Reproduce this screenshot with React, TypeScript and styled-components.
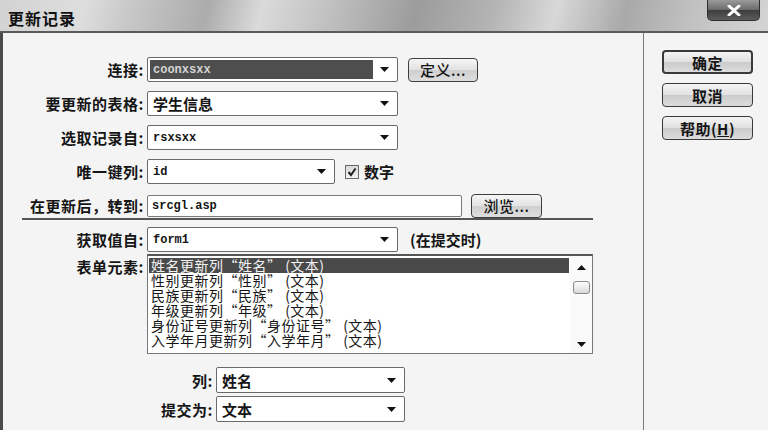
import React from "react";
import styled, { createGlobalStyle } from "styled-components";

const GlobalStyle = createGlobalStyle`
  * { box-sizing: border-box; }
  body {
    margin: 0;
    background: #f3f3f3;
    font-family: "Noto Sans CJK SC", "Liberation Sans", sans-serif;
    color: #151515;
  }
`;

const Window = styled.div`
  width: 768px;
  height: 430px;
  overflow: hidden;
  display: flex;
  flex-direction: column;
  background: #f4f4f4;
`;

const TitleBar = styled.div`
  height: 33px;
  flex: none;
  display: flex;
  justify-content: space-between;
  align-items: flex-start;
  padding: 0 8px 0 8px;
  border-bottom: 2px solid #5a5a5a;
  background: linear-gradient(
    105deg,
    #d2d2d2 0%,
    #dedede 11%,
    #c8c8c8 17%,
    #acacac 27%,
    #dadada 34%,
    #c6c6c6 41%,
    #9c9c9c 54%,
    #b4b4b4 64%,
    #d8d8d8 72%,
    #a9a9a9 81%,
    #c2c2c2 90%,
    #d4d4d4 100%
  );
`;

const Title = styled.div`
  margin-top: 6px;
  font-size: 16px;
  font-weight: 700;
  letter-spacing: 1px;
  color: #111;
`;

const CloseButton = styled.div`
  width: 53px;
  height: 21px;
  display: flex;
  align-items: center;
  justify-content: center;
  border: 1px solid #2e2e2e;
  border-top: none;
  border-radius: 0 0 5px 5px;
  background: linear-gradient(#9a9a9a, #6a6a6a 50%, #3e3e3e 51%, #5c5c5c);
`;

const Body = styled.div`
  flex: 1;
  display: flex;
  border-left: 3px solid #4a4a4a;
`;

const Main = styled.div`
  width: 641px;
  border-right: 1px solid #7a7a7a;
  padding-top: 24px;
  display: flex;
  flex-direction: column;
`;

const Group = styled.div<{ gap: number; top?: number }>`
  display: flex;
  flex-direction: column;
  gap: ${(p) => p.gap}px;
  margin-top: ${(p) => p.top ?? 0}px;
`;

const Row = styled.div<{ h?: number; top?: boolean }>`
  display: flex;
  align-items: ${(p) => (p.top ? "flex-start" : "center")};
  height: ${(p) => p.h ?? 25}px;
`;

const Label = styled.div<{ w: number; pt?: number }>`
  width: ${(p) => p.w}px;
  flex: none;
  text-align: right;
  font-size: 15px;
  font-weight: 700;
  letter-spacing: 0.5px;
  padding-top: ${(p) => p.pt ?? 0}px;
  margin-right: 3px;
  white-space: nowrap;
`;

const SelectBox = styled.div<{ w: number; h?: number }>`
  width: ${(p) => p.w}px;
  height: ${(p) => p.h ?? 25}px;
  flex: none;
  display: flex;
  align-items: center;
  background: #fff;
  border: 1px solid #6a6a6a;
  border-radius: 2px;
  padding: 2px;
`;

const Value = styled.div<{ mono?: boolean; selected?: boolean }>`
  flex: 1;
  height: 100%;
  display: flex;
  align-items: center;
  padding-left: 3px;
  font-family: ${(p) =>
    p.mono
      ? `"Liberation Mono", "DejaVu Sans Mono", monospace`
      : `"Noto Sans CJK SC", sans-serif`};
  font-size: ${(p) => (p.mono ? 12 : 15)}px;
  font-weight: 700;
  background: ${(p) => (p.selected ? "#4e4e4e" : "transparent")};
  color: ${(p) => (p.selected ? "#d4d4d4" : "#151515")};
`;

const ArrowCell = styled.div`
  width: 22px;
  flex: none;
  display: flex;
  justify-content: center;
  align-items: center;
`;

const TextInput = styled.div<{ w: number }>`
  width: ${(p) => p.w}px;
  height: 22px;
  flex: none;
  display: flex;
  align-items: center;
  padding-left: 4px;
  background: #fff;
  border: 1px solid #7a7a7a;
  border-radius: 2px;
  font-family: "Liberation Mono", "DejaVu Sans Mono", monospace;
  font-size: 12px;
  font-weight: 700;
`;

const SmallButton = styled.div<{ w: number; ml: number }>`
  width: ${(p) => p.w}px;
  height: 24px;
  margin-left: ${(p) => p.ml}px;
  flex: none;
  display: flex;
  align-items: center;
  justify-content: center;
  border: 1px solid #3e3e3e;
  border-radius: 4px;
  background: linear-gradient(#f6f6f6, #e2e2e2 50%, #cfcfcf 52%, #dedede);
  font-size: 15px;
  font-weight: 500;
  letter-spacing: 0.5px;
`;

const CheckBox = styled.div`
  width: 14px;
  height: 14px;
  margin-left: 10px;
  flex: none;
  display: flex;
  align-items: center;
  justify-content: center;
  border: 1px solid #6a6a6a;
  background: linear-gradient(#d8d8d8, #f4f4f4);
`;

const Aside = styled.span<{ ml: number }>`
  margin-left: ${(p) => p.ml}px;
  font-size: 15px;
  font-weight: 700;
`;

const Divider = styled.div`
  margin: 0 0 0 19px;
  width: 571px;
  border-top: 2px solid #555;
`;

const ListBox = styled.div`
  width: 446px;
  height: 100px;
  flex: none;
  display: flex;
  background: #fff;
  border: 1px solid #777;
  border-top: 2px solid #555;
`;

const Items = styled.div`
  flex: 1;
  padding: 2px 1px 0 1px;
`;

const Item = styled.div<{ selected?: boolean }>`
  height: 15px;
  line-height: 15px;
  padding-left: 2px;
  font-size: 14px;
  letter-spacing: 0.5px;
  white-space: nowrap;
  background: ${(p) => (p.selected ? "#4a4a4a" : "transparent")};
  color: ${(p) => (p.selected ? "#f2f2f2" : "#151515")};
`;

const ScrollBar = styled.div`
  width: 22px;
  flex: none;
  display: flex;
  flex-direction: column;
  align-items: center;
  padding: 9px 0 6px;
  background: #fafafa;
`;

const Thumb = styled.div`
  width: 17px;
  height: 13px;
  margin-top: 11px;
  border: 1px solid #8a8a8a;
  border-radius: 3px;
  background: linear-gradient(#fdfdfd, #d9d9d9);
`;

const Spacer = styled.div`
  flex: 1;
`;

const Side = styled.div`
  flex: 1;
  padding: 17px 0 0 18px;
  display: flex;
  flex-direction: column;
  gap: 9px;
`;

const DialogButton = styled.div<{ primary?: boolean }>`
  width: 91px;
  height: 24px;
  display: flex;
  align-items: center;
  justify-content: center;
  border: ${(p) => (p.primary ? 2 : 1)}px solid #3a3a3a;
  border-radius: 4px;
  background: linear-gradient(#f4f4f4, #e0e0e0 50%, #cbcbcb 52%, #dcdcdc);
  font-size: 15px;
  font-weight: 700;
  letter-spacing: 0.5px;
`;

const Arrow = ({ up }: { up?: boolean }) => (
  <svg width="9" height="5" viewBox="0 0 9 5">
    <path d={up ? "M0 5 L4.5 0 L9 5 Z" : "M0 0 L9 0 L4.5 5 Z"} fill="#111" />
  </svg>
);

type SelectProps = {
  w: number;
  h?: number;
  value: string;
  mono?: boolean;
  selected?: boolean;
};

const Select = ({ w, h, value, mono, selected }: SelectProps) => (
  <SelectBox w={w} h={h}>
    <Value mono={mono} selected={selected}>
      {value}
    </Value>
    <ArrowCell>
      <Arrow />
    </ArrowCell>
  </SelectBox>
);

const items = [
  "姓名更新列“姓名” (文本)",
  "性别更新列“性别” (文本)",
  "民族更新列“民族” (文本)",
  "年级更新列“年级” (文本)",
  "身份证号更新列“身份证号” (文本)",
  "入学年月更新列“入学年月” (文本)",
];

export default function App() {
  return (
    <Window>
      <GlobalStyle />
      <TitleBar>
        <Title>更新记录</Title>
        <CloseButton>
          <svg width="14" height="11" viewBox="0 0 14 11">
            <path
              d="M2 1 L12 10 M12 1 L2 10"
              stroke="#fff"
              strokeWidth="3"
              strokeLinecap="round"
            />
          </svg>
        </CloseButton>
      </TitleBar>
      <Body>
        <Main>
          <Group gap={9}>
            <Row>
              <Label w={141}>连接:</Label>
              <Select w={251} value="coonxsxx" mono selected />
              <SmallButton w={70} ml={10}>
                定义...
              </SmallButton>
            </Row>
            <Row>
              <Label w={141}>要更新的表格:</Label>
              <Select w={251} value="学生信息" />
            </Row>
            <Row>
              <Label w={141}>选取记录自:</Label>
              <Select w={251} value="rsxsxx" mono />
            </Row>
            <Row>
              <Label w={141}>唯一键列:</Label>
              <Select w={188} value="id" mono />
              <CheckBox>
                <svg width="10" height="10" viewBox="0 0 10 10">
                  <path
                    d="M1.5 5 L4 8 L8.5 1.5"
                    stroke="#222"
                    strokeWidth="2"
                    fill="none"
                  />
                </svg>
              </CheckBox>
              <Aside ml={5}>数字</Aside>
            </Row>
            <Row>
              <Label w={141}>在更新后，转到:</Label>
              <TextInput w={315}>srcgl.asp</TextInput>
              <SmallButton w={71} ml={9}>
                浏览...
              </SmallButton>
            </Row>
          </Group>
          <Divider />
          <Group gap={2} top={7}>
            <Row>
              <Label w={141}>获取值自:</Label>
              <Select w={251} value="form1" mono />
              <Aside ml={12}>(在提交时)</Aside>
            </Row>
            <Row top h={100}>
              <Label w={141} pt={2}>
                表单元素:
              </Label>
              <ListBox>
                <Items>
                  {items.map((t, i) => (
                    <Item key={t} selected={i === 0}>
                      {t}
                    </Item>
                  ))}
                </Items>
                <ScrollBar>
                  <Arrow up />
                  <Thumb />
                  <Spacer />
                  <Arrow />
                </ScrollBar>
              </ListBox>
            </Row>
          </Group>
          <Group gap={3} top={13}>
            <Row h={26}>
              <Label w={210}>列:</Label>
              <Select w={189} h={26} value="姓名" />
            </Row>
            <Row h={26}>
              <Label w={210}>提交为:</Label>
              <Select w={189} h={26} value="文本" />
            </Row>
          </Group>
        </Main>
        <Side>
          <DialogButton primary>确定</DialogButton>
          <DialogButton>取消</DialogButton>
          <DialogButton>
            帮助(<u>H</u>)
          </DialogButton>
        </Side>
      </Body>
    </Window>
  );
}
